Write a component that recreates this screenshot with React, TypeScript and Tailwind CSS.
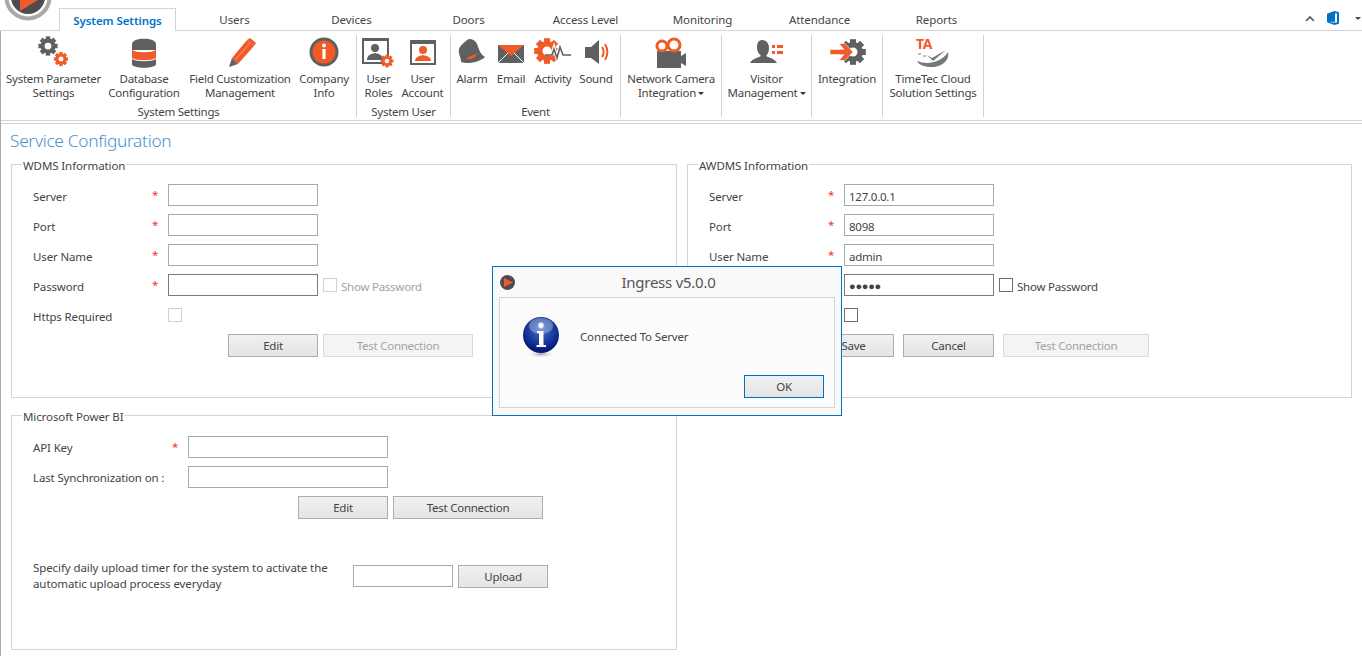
import React from 'react'

const GRAY = '#5f6062'
const ORANGE = '#f15a29'

const Gear = ({ cx, cy, r, color, hole = '#fff', teeth = 4 }: { cx: number; cy: number; r: number; color: string; hole?: string; teeth?: number }) => (
  <g>
    {Array.from({ length: teeth }).map((_, i) => (
      <rect
        key={i}
        x={cx - r * 0.3}
        y={cy - r * 1.28}
        width={r * 0.6}
        height={r * 2.56}
        fill={color}
        transform={`rotate(${(i * 180) / teeth} ${cx} ${cy})`}
      />
    ))}
    <circle cx={cx} cy={cy} r={r} fill={color} />
    <circle cx={cx} cy={cy} r={r * 0.45} fill={hole} />
  </g>
)

const Svg = ({ children, w = 36, h = 34 }: { children: React.ReactNode; w?: number; h?: number }) => (
  <svg width={w} height={h} viewBox={`0 0 ${w} ${h}`}>
    {children}
  </svg>
)

const ParamIcon = () => (
  <Svg>
    <Gear cx={12} cy={11} r={7.500} color={GRAY} />
    <Gear cx={25} cy={24} r={5.500} color={ORANGE} />
  </Svg>
)
const DbIcon = () => (
  <Svg>
    <path d="M6 9c0-7 24-7 24 0v6H6z" fill={GRAY} />
    <path d="M6 15c5 3 19 3 24 0v8c-5 3-19 3-24 0z" fill={ORANGE} />
    <path d="M6 24c5 3 19 3 24 0v5c0 5-24 5-24 0z" fill={GRAY} />
  </Svg>
)
const PencilIcon = () => (
  <Svg>
    <path d="M10 23L25 5l7 6-16 18z" fill={ORANGE} />
    <path d="M25 5l3-2 6 5-2 3z" fill={ORANGE} />
    <path d="M10 23l6 6-9 3z" fill={GRAY} />
    <path d="M14 24L28 8" stroke="#fff" strokeWidth="0.7" opacity="0.6" />
  </Svg>
)
const InfoIcon = () => (
  <Svg>
    <circle cx={18} cy={17} r={14.500} fill={GRAY} />
    <circle cx={18} cy={17} r={11.500} fill={ORANGE} />
    <circle cx={18} cy={10.500} r={2} fill="#fff" />
    <rect x={16.400} y={14} width={3.200} height={10} fill="#fff" />
  </Svg>
)
const RolesIcon = () => (
  <Svg>
    <rect x={2} y={4} width={25} height={24} fill="#fff" stroke={GRAY} strokeWidth="2" />
    <rect x={2} y={3} width={25} height={3} fill={GRAY} />
    <circle cx={14} cy={13} r={4} fill={GRAY} />
    <path d="M6 25c0-5 4-6 8-7 4 1 8 2 8 7z" fill={GRAY} />
    <Gear cx={26} cy={26} r={5} color={ORANGE} />
  </Svg>
)
const AccountIcon = () => (
  <Svg>
    <rect x={6} y={6} width={24} height={23} fill="#fff" stroke={GRAY} strokeWidth="2" />
    <rect x={6} y={5} width={24} height={4} fill={GRAY} />
    <circle cx={18} cy={15} r={4} fill={ORANGE} />
    <path d="M10 26c0-4 4-5 8-6 4 1 8 2 8 6z" fill={ORANGE} />
  </Svg>
)
const AlarmIcon = () => (
  <Svg>
    <path d="M12 6c4-4 9-1 11 3 2 5 3 10 8 13-4 4-16 8-24 5 0-6-3-8-2-13 1-3 4-6 7-8z" fill={GRAY} />
    <path d="M12 24c3-3 7-4 11-5-2 4-6 6-11 5z" fill={ORANGE} />
  </Svg>
)
const EmailIcon = () => (
  <Svg>
    <rect x={5} y={10} width={26} height={18} fill={GRAY} />
    <path d="M5 10h26L18 21z" fill={ORANGE} />
    <path d="M5 28l10-10M31 28L21 18" stroke="#fff" strokeWidth="1" />
  </Svg>
)
const ActivityIcon = () => (
  <Svg w={40}>
    <Gear cx={14} cy={16} r={10} color={ORANGE} />
    <path d="M14 19h5l2-6 3 10 3-12 3 8h8" fill="none" stroke="#fff" strokeWidth="3.500" />
    <path d="M12 20h7l2-6 3 9 3-11 3 8h8" fill="none" stroke={GRAY} strokeWidth="1.600" />
  </Svg>
)
const SoundIcon = () => (
  <Svg>
    <path d="M7 12h6l8-7v24l-8-6H7z" fill={GRAY} />
    <path d="M24 12c2 3 2 7 0 10M27 9c3 5 3 11 0 16" fill="none" stroke={ORANGE} strokeWidth="2" />
  </Svg>
)
const CameraIcon = () => (
  <Svg w={44}>
    <rect x={8} y={16} width={24} height={17} fill={GRAY} />
    <path d="M32 21l5-3v13l-5-3z" fill={GRAY} />
    <circle cx={13} cy={11} r={5} fill="#fff" stroke={ORANGE} strokeWidth="3" />
    <circle cx={25} cy={10} r={6} fill="#fff" stroke={ORANGE} strokeWidth="3" />
  </Svg>
)
const VisitorIcon = () => (
  <Svg w={40}>
    <path d="M15 5c5 0 7 4 7 8 0 3-1 6-3 8 4 2 9 3 11 7H3c2-4 7-5 11-7-2-2-4-5-4-8 0-4 1-8 5-8z" fill={GRAY} />
    <path d="M25 10h3v3h-3zM30 10h6v3h-6zM25 16h3v3h-3zM30 16h6v3h-6z" fill={ORANGE} />
  </Svg>
)
const IntegrationIcon = () => (
  <Svg w={40}>
    <Gear cx={26} cy={17} r={10} color={GRAY} />
    <path d="M3 14.500h14l-5-6h6l8 8.500-8 8.500h-6l5-6H3z" fill={ORANGE} stroke="#fff" strokeWidth="0.600" />
  </Svg>
)
const TimeTecIcon = () => (
  <div className="relative h-[34px] w-[36px]">
    <span className="absolute left-[1px] top-[2px] text-[14px] leading-[13px] font-bold text-[#f15a29]">TA</span>
    <svg width={36} height={34} viewBox="0 0 36 34" className="absolute left-0 top-0">
      <path d="M2 26c10 4 24 2 31-9 2 8-6 15-16 15-7 0-13-2-15-6z" fill="#77787a" />
      <path d="M12 20l5 3 14-8-13 11z" fill="#77787a" />
      <path d="M3 19h3M8 21h3" stroke="#77787a" strokeWidth="1" />
    </svg>
  </div>
)

type Item = { w: string; icon: React.ReactNode; lines: string[]; caret?: boolean }

const Caret = () => <span className="ml-[2px] inline-block border-x-[3px] border-t-[3px] border-x-transparent border-t-[#333] align-middle" />

const RibbonItem = ({ w, icon, lines, caret }: Item) => (
  <div className={`${w} flex flex-col items-center text-center`}>
    <div className="flex h-[34px] items-center justify-center">{icon}</div>
    <div className="mt-[3px] whitespace-nowrap leading-[14px]">
      {lines.map((l, i) => (
        <div key={l}>
          {l}
          {caret && i === lines.length - 1 && <Caret />}
        </div>
      ))}
    </div>
  </div>
)

const RibbonGroup = ({ w, label, items }: { w: string; label?: string; items: Item[] }) => (
  <div className={`${w} h-[82px] shrink-0 border-r border-[#d4d4d4]`}>
    <div className="flex h-[70px]">
      {items.map(it => (
        <RibbonItem key={it.lines.join()} {...it} />
      ))}
    </div>
    <div className="text-center leading-[14px]">{label}</div>
  </div>
)

const Btn = ({ w, children, off, blue }: { w: string; children: React.ReactNode; off?: boolean; blue?: boolean }) => (
  <button
    className={`${w} block h-[23px] shrink-0 border pt-[1px] ${
      off
        ? 'border-[#d9d9d9] bg-[#f4f4f4] text-[#a2a2a2]'
        : blue
          ? 'border-[#0072c6] bg-linear-to-b from-[#f0f0f0] to-[#e5e5e5] text-[#444]'
          : 'border-[#acacac] bg-linear-to-b from-[#f0f0f0] to-[#e5e5e5] text-[#444]'
    }`}
  >
    {children}
  </button>
)

const Check = ({ on }: { on?: boolean }) => <span className={`block h-[14px] w-[14px] shrink-0 border bg-white ${on ? 'border-[#707070]' : 'border-[#d0d0d0]'}`} />

const Box = ({ value, dark, w = 'w-[150px]', dots }: { value?: string; dark?: boolean; w?: string; dots?: boolean }) => (
  <input
    readOnly
    value={value ?? ''}
    className={`${w} h-[22px] shrink-0 border bg-white px-[4px] text-[#444] outline-none ${dots ? 'text-[11px]' : 'pt-[2px]'} ${dark ? 'border-[#7a7a7a]' : 'border-[#a9a9a9]'}`}
  />
)

const Row = ({ label, children, req = true, labelW = 'w-[119px]', starW = 'w-[16px]', labelPt = 'pt-[4px]' }: { label: string; children: React.ReactNode; req?: boolean; labelW?: string; starW?: string; labelPt?: string }) => (
  <div className="flex h-[22px] items-center">
    <div className={`${labelW} ${labelPt} shrink-0 whitespace-nowrap tracking-[-0.14px]`}>{label}</div>
    <div className={`${starW} shrink-0 text-[#f03030]`}>{req ? '*' : ''}</div>
    {children}
  </div>
)

const ServerForm = ({ vals, active }: { vals?: string[]; active?: boolean }) => (
  <div className="flex flex-col gap-[8px]">
    <Row label="Server"><Box value={vals?.[0]} /></Row>
    <Row label="Port"><Box value={vals?.[1]} /></Row>
    <Row label="User Name"><Box value={vals?.[2]} /></Row>
    <Row label="Password">
      <Box value={vals?.[3]} dark dots />
      <span className="ml-[5px]"><Check on={active} /></span>
      <span className={`ml-[4px] pt-[4px] ${active ? '' : 'text-[#a2a2a2]'}`}>Show Password</span>
    </Row>
    <Row label="Https Required" req={false}><Check on={active} /></Row>
  </div>
)

const Group = ({ title, className, children }: { title: string; className: string; children: React.ReactNode }) => (
  <fieldset className={`${className} border border-[#d4d4d4]`}>
    <legend className="ml-[10px] h-[16px] px-[1px] leading-[20px] tracking-[-0.1px]">{title}</legend>
    {children}
  </fieldset>
)

export default function App() {
  return (
    <div className="relative h-[657px] w-full overflow-hidden bg-white font-['Noto_Sans',sans-serif] text-[11.5px] tracking-[-0.25px] text-[#444]">
      {/* app logo, cut off by the window top */}
      <svg width={50} height={24} viewBox="0 0 50 24" className="absolute left-[3px] top-0">
        <circle cx={25} cy={-3} r={21.500} fill="#fff" stroke="#a8a8a8" strokeWidth="4" />
        <circle cx={25} cy={-3} r={17} fill="#4d4d4f" />
        <path d="M17 0l18 0-18 11z" fill={ORANGE} />
      </svg>

      {/* tabs */}
      <div className="flex h-[31px] border-b border-[#d4d4d4] pl-[59px] pt-[8px] tracking-[-0.08px]">
        <div className="h-[23px] w-[117px] border-x border-t border-[#d4d4d4] bg-white text-center font-semibold leading-[23px] text-[#0072c6]">System Settings</div>
        {['Users', 'Devices', 'Doors', 'Access Level', 'Monitoring', 'Attendance', 'Reports'].map(t => (
          <div key={t} className="w-[117px] text-center leading-[23px]">{t}</div>
        ))}
        <div className="ml-auto flex items-center gap-[12px] pb-[2px]">
          <svg width={10} height={6} viewBox="0 0 10 6"><path d="M1 6l4-4 4 4" fill="none" stroke="#555" strokeWidth="1.600" /></svg>
          <svg width={12} height={14} viewBox="0 0 12 14"><path d="M7.500 0L0 2.700v8.600L7.500 14l4.500-1.300V1.300zM7.500 2.300v9.400l-5-.7 5-.5z" fill="#0072c6" /><path d="M8 2.500h2v9H8z" fill="#fff" /></svg>
          <span className="ml-[4px] mr-[1px] inline-block border-x-[3px] border-t-[3px] border-x-transparent border-t-[#444]" />
        </div>
      </div>

      {/* ribbon */}
      <div className="h-[90px] border-b border-l border-b-[#d4d4d4] border-l-[#a8a8a8] pt-[4px]">
        <div className="flex">
          <RibbonGroup
            w="w-[356px]"
            label="System Settings"
            items={[
              { w: 'w-[105px]', icon: <ParamIcon />, lines: ['System Parameter', 'Settings'] },
              { w: 'w-[76px]', icon: <DbIcon />, lines: ['Database', 'Configuration'] },
              { w: 'w-[116px]', icon: <PencilIcon />, lines: ['Field Customization', 'Management'] },
              { w: 'w-[52px]', icon: <InfoIcon />, lines: ['Company', 'Info'] }
            ]}
          />
          <RibbonGroup
            w="w-[94px]"
            label="System User"
            items={[
              { w: 'w-[43px]', icon: <RolesIcon />, lines: ['User', 'Roles'] },
              { w: 'w-[45px]', icon: <AccountIcon />, lines: ['User', 'Account'] }
            ]}
          />
          <RibbonGroup
            w="w-[170px]"
            label="Event"
            items={[
              { w: 'w-[42px]', icon: <AlarmIcon />, lines: ['Alarm'] },
              { w: 'w-[36px]', icon: <EmailIcon />, lines: ['Email'] },
              { w: 'w-[48px]', icon: <ActivityIcon />, lines: ['Activity'] },
              { w: 'w-[38px]', icon: <SoundIcon />, lines: ['Sound'] }
            ]}
          />
          <RibbonGroup w="w-[101px]" items={[{ w: 'w-[100px]', icon: <CameraIcon />, lines: ['Network Camera', 'Integration'], caret: true }]} />
          <RibbonGroup w="w-[90px]" items={[{ w: 'w-[89px]', icon: <VisitorIcon />, lines: ['Visitor', 'Management'], caret: true }]} />
          <RibbonGroup w="w-[71px]" items={[{ w: 'w-[70px]', icon: <IntegrationIcon />, lines: ['Integration'] }]} />
          <RibbonGroup w="w-[101px]" items={[{ w: 'w-[100px]', icon: <TimeTecIcon />, lines: ['TimeTec Cloud', 'Solution Settings'] }]} />
        </div>
      </div>

      {/* content */}
      <div className="h-[535px] border-l border-[#a8a8a8] pt-[2px]">
        <div className="border-t border-[#d4d4d4] pl-[9px] pt-[5px] text-[17.3px] font-light leading-[24px] tracking-[-0.3px] text-[#4a90cc]">Service Configuration</div>
        <div className="flex gap-[10px] pl-[10px] pr-[10px] pt-[3px]">
          <div className="flex w-[666px] shrink-0 flex-col gap-[9px]">
            <Group title="WDMS Information" className="h-[242px]">
              <div className="pl-[21px] pt-[12px]">
                <ServerForm />
                <div className="ml-[195px] mt-[8px] flex gap-[5px]">
                  <Btn w="w-[90px]">Edit</Btn>
                  <Btn w="w-[150px]" off>Test Connection</Btn>
                </div>
              </div>
            </Group>
            <Group title="Microsoft Power BI" className="h-[243px]">
              <div className="pl-[21px] pt-[13px]">
                <div className="flex flex-col gap-[8px]">
                  <Row label="API Key" labelW="w-[139px]" labelPt="pt-[2px]"><Box w="w-[200px]" /></Row>
                  <Row label="Last Synchronization on :" req={false} labelW="w-[139px]" labelPt="pt-[2px]"><Box w="w-[200px]" /></Row>
                </div>
                <div className="ml-[265px] mt-[8px] flex gap-[5px]">
                  <Btn w="w-[90px]">Edit</Btn>
                  <Btn w="w-[150px]">Test Connection</Btn>
                </div>
                <div className="mt-[41px] flex items-center">
                  <div className="w-[320px] shrink-0 leading-[16px] tracking-[-0.09px]">
                    Specify daily upload timer for the system to activate the
                    <br />
                    automatic upload process everyday
                  </div>
                  <Box w="w-[100px]" />
                  <span className="ml-[5px]"><Btn w="w-[90px]">Upload</Btn></span>
                </div>
              </div>
            </Group>
          </div>
          <Group title="AWDMS Information" className="h-[242px] w-[665px] shrink-0">
            <div className="pl-[21px] pt-[12px]">
              <ServerForm vals={['127.0.0.1', '8098', 'admin', '●●●●●']} active />
              <div className="ml-[104px] mt-[8px] flex gap-[9px]">
                <Btn w="w-[81px]">Save</Btn>
                <Btn w="w-[91px]">Cancel</Btn>
                <Btn w="w-[146px]" off>Test Connection</Btn>
              </div>
            </div>
          </Group>
        </div>
      </div>

      {/* message box */}
      <div className="absolute left-[492px] top-[266px] flex h-[150px] w-[350px] flex-col border border-[#0072c6] bg-[#f9f9f9] px-[6px] pb-[7px]">
        <div className="relative flex h-[30px] shrink-0 items-center justify-center pl-[3px] text-[15px] leading-[20px] text-[#555]">
          <svg width={15} height={15} viewBox="0 0 15 15" className="absolute left-[1px] top-[8px]">
            <circle cx={7.500} cy={7.500} r={7.500} fill="#4d4d4f" />
            <path d="M4 3l9 4.500L4 12z" fill={ORANGE} />
          </svg>
          Ingress v5.0.0
        </div>
        <div className="flex flex-1 flex-col justify-between border border-[#d4d4d4] bg-[#fcfcfc] pb-[9px] pl-[23px] pr-[10px] pt-[19px]">
          <div className="flex items-center gap-[21px]">
            <svg width={36} height={41} viewBox="0 0 36 41">
              <defs>
                <radialGradient id="sphere" cx="50%" cy="35%" r="60%">
                  <stop offset="0%" stopColor="#3f6fd0" />
                  <stop offset="100%" stopColor="#04197a" />
                </radialGradient>
                <radialGradient id="shade" cx="50%" cy="50%" r="50%">
                  <stop offset="0%" stopColor="#999" />
                  <stop offset="100%" stopColor="#fff" stopOpacity="0" />
                </radialGradient>
              </defs>
              <ellipse cx={18} cy={37} rx={15} ry={4} fill="url(#shade)" />
              <circle cx={18} cy={18} r={18} fill="url(#sphere)" />
              <ellipse cx={18} cy={9} rx={12} ry={8} fill="#fff" opacity="0.3" />
              <circle cx={18} cy={8.500} r={3} fill="#fff" stroke="#9db4e6" strokeWidth="1" />
              <path d="M14 14h6.500v14H23v2H13.500v-2H16V16h-2z" fill="#fff" />
            </svg>
            <span className="-mt-[2px] tracking-[-0.15px]">Connected To Server</span>
          </div>
          <div className="flex justify-end">
            <Btn w="w-[80px]" blue>OK</Btn>
          </div>
        </div>
      </div>
    </div>
  )
}
